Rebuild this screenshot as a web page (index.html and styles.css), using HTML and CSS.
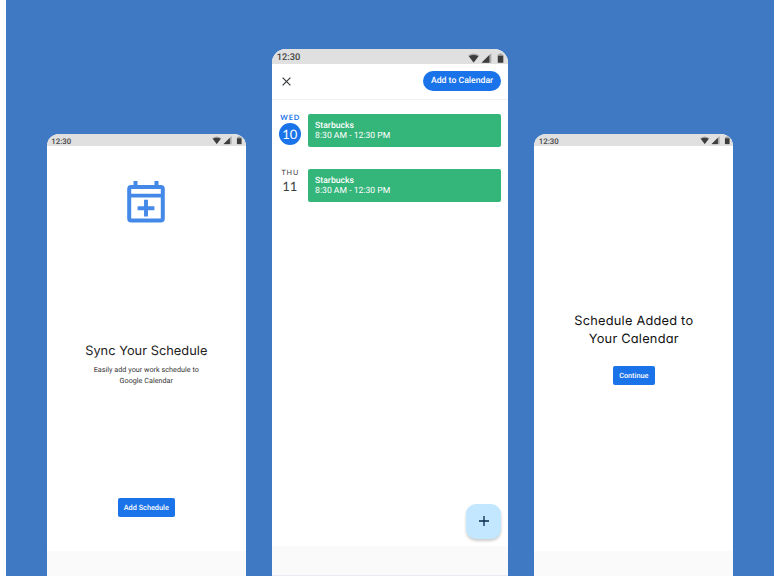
FILE: index.html
```html
<!DOCTYPE html>
<html lang="en">
<head>
<meta charset="utf-8">
<title>Schedule sync</title>
<link rel="stylesheet" href="styles.css">
</head>
<body>
<svg width="0" height="0" class="defs">
  <symbol id="status" viewBox="0 0 38 10">
    <path d="M0 2.5Q5.5-1.5 11 2.5L5.5 9.5Z" fill="#aaa"/>
    <path d="M.9 3.2Q5.5 .8 10.1 3.2L5.5 9.2Z" fill="#3c3c3c"/>
    <path d="M13.2 9.5H22.8V0Z" fill="#aaa"/>
    <path d="M13.2 9.5H20.8V2Z" fill="#3c3c3c"/>
    <path d="M29 1.2H30.6V.2H32.8V1.2H34.4V3H29Z" fill="#aaa"/>
    <path d="M29 2.6H34.4V9.5H29Z" fill="#3c3c3c"/>
  </symbol>
</svg>
<main class="stage">
  <section class="phone side">
    <header class="status"><span>12:30</span><svg><use href="#status"/></svg></header>
    <div class="screen intro">
      <svg class="calendar" viewBox="0 0 38 42" fill="none" stroke="#4489e8">
        <path d="M8.5 0V6M29.5 0V6" stroke-width="4"/>
        <rect x="2.2" y="6" width="33.6" height="33.6" rx="2" stroke-width="4"/>
        <path d="M2 14.7H36" stroke-width="3.7"/>
        <path d="M10.6 27.2H27.4M19 18.8V35.6" stroke-width="3.9"/>
      </svg>
      <h1>Sync Your Schedule</h1>
      <p>Easily add your work schedule to<br>Google Calendar</p>
      <button class="action">Add Schedule</button>
    </div>
    <footer></footer>
  </section>

  <section class="phone main">
    <header class="status"><span>12:30</span><svg><use href="#status"/></svg></header>
    <div class="toolbar">
      <svg class="close" viewBox="0 0 9 9"><path d="M.6.6L8.4 8.4M8.4.6L.6 8.4" stroke="#3c4043" stroke-width="1.25"/></svg>
      <button class="pill">Add to Calendar</button>
    </div>
    <div class="agenda">
      <div class="day today">
        <div class="date"><span>WED</span><b>10</b></div>
        <div class="event"><strong>Starbucks</strong><span>8:30 AM - 12:30 PM</span></div>
      </div>
      <div class="day">
        <div class="date"><span>THU</span><b>11</b></div>
        <div class="event"><strong>Starbucks</strong><span>8:30 AM - 12:30 PM</span></div>
      </div>
    </div>
    <button class="fab"><svg viewBox="0 0 10 10"><path d="M0 5H10M5 0V10" stroke="#06294a" stroke-width="1.3"/></svg></button>
    <footer></footer>
  </section>

  <section class="phone side">
    <header class="status"><span>12:30</span><svg><use href="#status"/></svg></header>
    <div class="screen done">
      <h1>Schedule Added to<br><span>Your Calendar</span></h1>
      <button class="action">Continue</button>
    </div>
    <footer></footer>
  </section>
</main>
</body>
</html>
```
FILE: styles.css
```css
* { box-sizing: border-box; }
body { margin: 0; background: #fff; font-family: Roboto, sans-serif; text-rendering: geometricPrecision; }
button { border: 0; padding: 0; font: 500 8px Roboto, sans-serif; color: #fff; white-space: nowrap; text-rendering: inherit; }
svg { display: block; flex: none; }
.defs { position: absolute; }
.stage { display: flex; gap: 26px; width: 768px; height: 576px; margin-left: 6px; padding-left: 40.8px; background: #3f79c4; overflow: hidden; }
.phone { display: flex; flex-direction: column; flex: none; background: #fff; border-radius: 12px 12px 0 0; overflow: hidden; }
.side { width: 199px; margin-top: 134px; }
.main { width: 236.5px; margin-top: 49.3px; border-radius: 14px 14px 0 0; }
.status { display: flex; justify-content: space-between; flex: none; height: 12px; padding: 0 1px 0 4.5px; background: #e0e0e0; color: #444; font-size: 7.8px; line-height: 15px; font-weight: 500; }
.status svg { width: 32.7px; height: 8.6px; margin-top: 2.2px; }
.main .status { height: 14.5px; font-size: 9.3px; line-height: 18px; padding: 0 1px 0 5px; }
.main .status svg { width: 39px; height: 10.3px; margin-top: 3.5px; }
.screen { display: flex; flex-direction: column; align-items: center; flex: 1; text-align: center; }
footer { flex: none; height: 25.5px; background: #fafafa; }
.main footer { height: 30.5px; border-bottom: 1px solid #e8ebf6; }
.calendar { width: 38px; height: 42px; margin-top: 35px; }
h1 { margin: 0; font: 400 12.8px/18px Inter, sans-serif; font-feature-settings: "cv11"; letter-spacing: .22px; white-space: nowrap; color: #111; }
.intro h1 { margin-top: 120px; letter-spacing: .03px; color: #222; }
.intro p { margin: 3px 0 0; font-size: 7.2px; line-height: 11px; letter-spacing: .03px; color: #333; }
.action { height: 19.5px; border-radius: 2px; background: #1a73e8; font-size: 7.3px; }
.intro .action { width: 57.5px; margin-top: 111.5px; }
.done h1 { margin-top: 167.3px; }
.done .action { width: 42px; margin-top: 16.3px; }
.toolbar { display: flex; justify-content: space-between; align-items: center; flex: none; height: 36px; padding: 0 7.5px 1px 10px; border-bottom: 1.5px solid #f0f0f0; }
.close { width: 9px; height: 9px; margin-top: 1px; }
.pill { width: 77.5px; height: 20px; padding-top: 1px; border-radius: 10px; background: #1a73e8; font-size: 8.7px; }
.agenda { display: flex; flex-direction: column; gap: 22px; flex: 1; padding: 14px 7.5px 0 7px; }
.day { display: flex; gap: 7.5px; height: 33px; }
.date { width: 22px; flex: none; display: flex; flex-direction: column; align-items: center; font-family: Lato, sans-serif; color: #3c4043; }
.date span { font-size: 7.2px; line-height: 7px; letter-spacing: .9px; margin-right: -.9px; }
.date b { flex: none; width: 22px; height: 22px; margin-top: -1px; border-radius: 50%; font-size: 13px; line-height: 22px; font-weight: 400; text-align: center; }
.today .date span { font-weight: 700; color: #1a73e8; }
.today .date b { margin-top: 2px; background: #1a73e8; color: #fff; }
.event { flex: 1; display: flex; flex-direction: column; padding: 7px 0 0 6.8px; border-radius: 2px; background: #34b57a; color: #fff; font-size: 8.65px; line-height: 10.6px; }
.event strong { font-weight: 500; }
.fab { display: flex; align-items: center; justify-content: center; align-self: flex-end; flex: none; width: 35px; height: 35px; margin: 0 7px 7px 0; border-radius: 10px; background: #c2e7ff; box-shadow: 0 2px 3px #0003; }
.fab svg { width: 10px; height: 10px; }
```
